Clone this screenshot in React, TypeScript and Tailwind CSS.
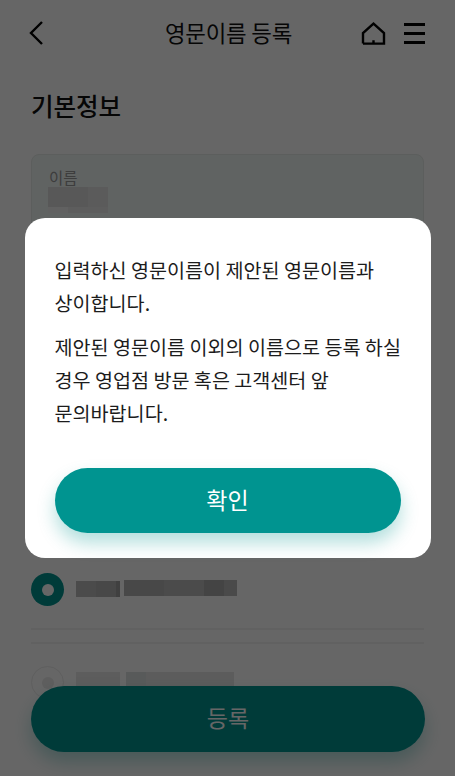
const font = { fontFamily: '"Noto Sans CJK KR", "Noto Sans", sans-serif' };

function Blocks({ cells, h }: { cells: [number, string][]; h: string }) {
  return (
    <div className={`flex ${h}`}>
      {cells.map(([w, color], i) => (
        <div key={i} style={{ width: w, backgroundColor: color }} />
      ))}
    </div>
  );
}

function App() {
  return (
    <div style={font} className="relative h-[776px] w-full overflow-hidden bg-white text-[#111]">
      <header className="flex h-[66px] items-center justify-between pl-[28px] pr-[30px]">
        <svg width="16" height="26" viewBox="0 0 16 26" fill="none" stroke="#000" strokeWidth="2.4">
          <path d="M14 2 3 13l11 11" />
        </svg>
        <h1 className="ml-[52px] text-[22.4px] font-normal tracking-[-0.2px]">영문이름 등록</h1>
        <div className="flex items-center gap-[18px]">
          <svg width="25" height="23" viewBox="0 0 25 23" fill="none" stroke="#000" strokeWidth="2.4">
            <path d="M2 21.6V11L12.5 1.7 23 11v10.6H2M12.5 21.6v-3.4" />
          </svg>
          <div className="flex w-[21px] flex-col gap-[6px]">
            <div className="h-[3px] bg-black" />
            <div className="h-[3px] bg-black" />
            <div className="h-[3px] bg-black" />
          </div>
        </div>
      </header>

      <main className="px-[31px]">
        <h2 className="mt-[22px] text-[24.5px] leading-[36px] font-medium">기본정보</h2>
        <div className="mt-[30px] h-[110px] rounded-[8px] border border-[#e6eae8] bg-[#f0f7f5] px-[17px] pt-[11px]">
          <p className="text-[15.5px] leading-[22px] text-[#999]">이름</p>
          <div className="-ml-[1px] -mt-[1px]">
            <Blocks h="h-[20px]" cells={[[40, '#dcdcdc'], [20, '#e4e4e4']]} />
            <Blocks h="h-[6px]" cells={[[20, '#f2f2f2'], [40, '#e8e8e8']]} />
          </div>
        </div>

        <div className="mt-[309px] flex items-center gap-[12px]">
          <div className="flex size-[33px] items-center justify-center rounded-full bg-[#009490]">
            <div className="size-[12px] rounded-full bg-white" />
          </div>
          <div className="-mt-[2px] flex items-start gap-[4px]">
            <div className="mt-[1px]">
              <Blocks h="h-[16px]" cells={[[20, '#bcbcbc'], [20, '#b4b4b4'], [4, '#a0a0a0']]} />
            </div>
            <Blocks h="h-[16px]" cells={[[40, '#b4b4b4'], [40, '#bcbcbc'], [20, '#aaaaaa'], [13, '#b8b8b8']]} />
          </div>
        </div>

        <div className="mt-[22px] border-t-2 border-[#f2f2f2]" />
        <div className="mt-[12px] border-t-2 border-[#f2f2f2]" />

        <div className="mt-[22px] flex items-center gap-[12px]">
          <div className="flex size-[33px] items-center justify-center rounded-full border border-[#ececec] bg-white">
            <div className="size-[12px] rounded-full bg-[#ebebeb]" />
          </div>
          <div className="-mt-[6px] flex gap-[6px]">
            <Blocks h="h-[15px]" cells={[[44, '#e8e8e8']]} />
            <Blocks h="h-[15px]" cells={[[20, '#dde2e2'], [88, '#e6e6e6']]} />
          </div>
        </div>
      </main>

      <button className="absolute bottom-[24px] left-[31px] h-[66px] w-[394px] rounded-full bg-[#009490] pb-[3px] text-[23px] text-white shadow-[0_10px_18px_rgba(0,148,144,0.3)]">
        등록
      </button>

      <div className="absolute inset-0 flex items-center justify-center bg-black/60">
        <div className="w-[406px] rounded-[20px] bg-white px-[30px] pt-[35px] pb-[25px]">
          <div className="text-[19.6px] leading-[33px] whitespace-nowrap text-[#1c1c1c]">
            <p>
              입력하신 영문이름이 제안된 영문이름과
              <br />
              상이합니다.
            </p>
            <p className="mt-[11px]">
              제안된 영문이름 이외의 이름으로 등록 하실
              <br />
              경우 영업점 방문 혹은 고객센터 앞
              <br />
              문의바랍니다.
            </p>
          </div>
          <button className="mt-[39px] h-[65px] w-full rounded-full bg-[#009490] pb-[2px] text-[23px] text-white shadow-[0_10px_18px_rgba(0,148,144,0.3)]">
            확인
          </button>
        </div>
      </div>
    </div>
  );
}

export default App;
